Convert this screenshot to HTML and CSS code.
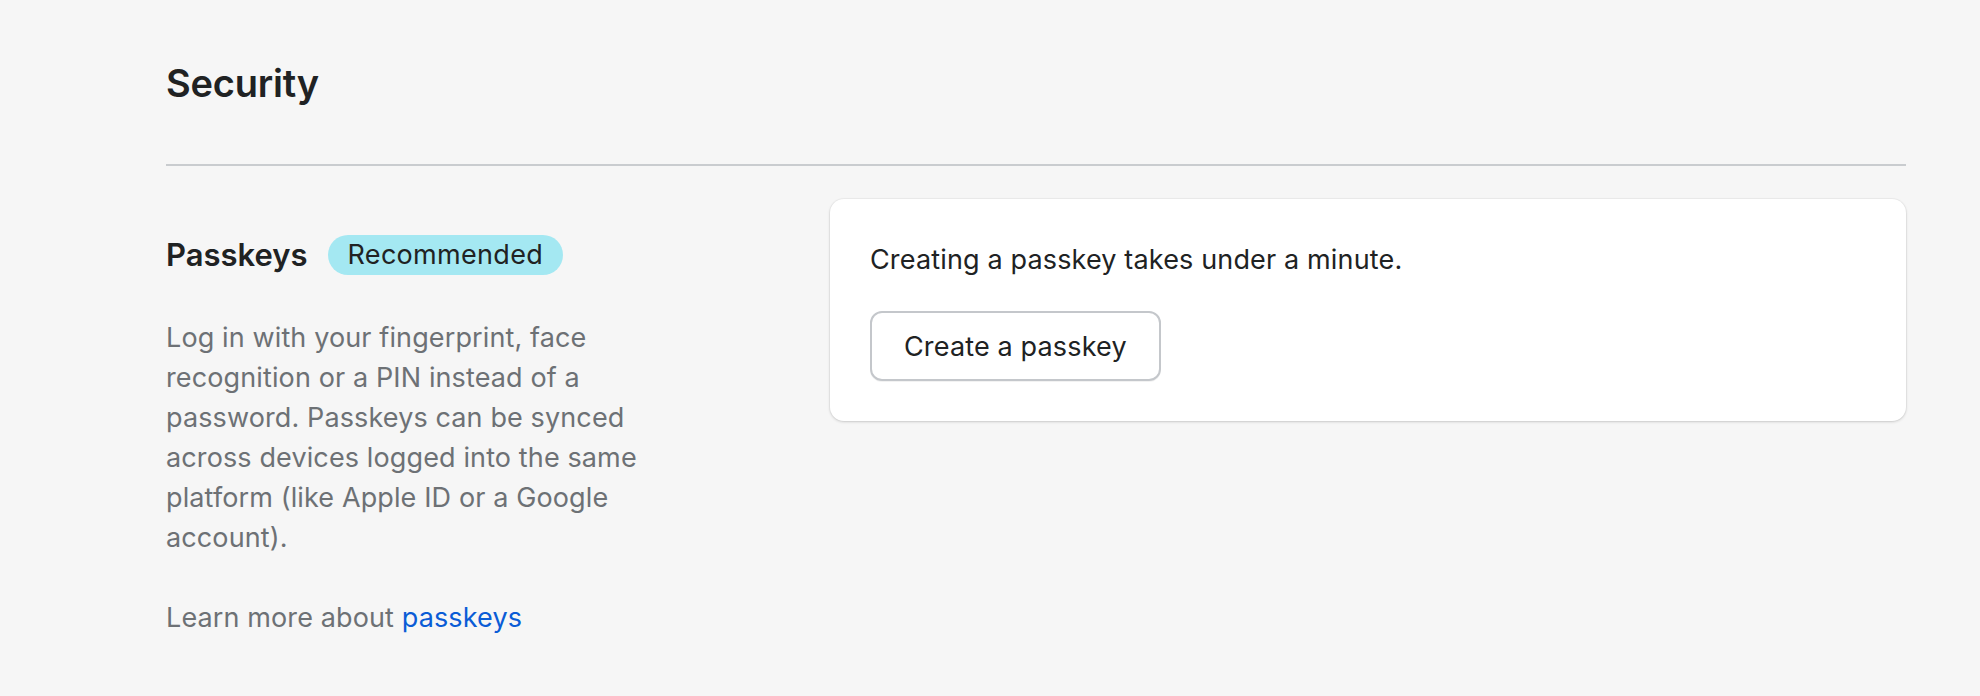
FILE: index.html
```html
<!DOCTYPE html>
<html lang="en">
<head>
<meta charset="utf-8">
<title>Security</title>
<link rel="stylesheet" href="styles.css">
</head>
<body>
<main class="page">
  <h1 class="page-title">Security</h1>
  <hr class="divider">
  <section class="section">
    <div class="section-info">
      <div class="section-heading">
        <h2 class="section-title">Passkeys</h2>
        <span class="badge">Recommended</span>
      </div>
      <p class="section-text">Log in with your fingerprint, face recognition or a PIN instead of a password. Passkeys can be synced across devices logged into the same platform (like Apple ID or a Google account).</p>
      <p class="section-text">Learn more about <a class="link" href="#">passkeys</a></p>
    </div>
    <div class="card">
      <p class="card-text">Creating a passkey takes under a minute.</p>
      <button class="button" type="button">Create a passkey</button>
    </div>
  </section>
</main>
</body>
</html>
```

FILE: styles.css
```css
html, body {
  margin: 0;
  padding: 0;
  background: #f6f6f6;
}

body {
  font-family: Inter, "Noto Sans", sans-serif;
  color: #202223;
}

.page {
  padding: 59px 74px 0 166px;
}

.page-title {
  margin: 0;
  font-size: 38px;
  font-weight: 600;
  line-height: 48px;
  letter-spacing: -0.2px;
}

.divider {
  margin: 57px 0 0;
  border: 0;
  height: 2px;
  background: #c9cccf;
}

.section {
  display: grid;
  grid-template-columns: 600px 1fr;
  column-gap: 64px;
  align-items: start;
  padding-top: 33px;
}

.section-info {
  padding-top: 36px;
}

.section-heading {
  display: flex;
  align-items: center;
  gap: 20px;
}

.section-title {
  margin: 0;
  font-size: 31px;
  font-weight: 600;
  line-height: 40px;
}

.badge {
  display: inline-flex;
  align-items: center;
  height: 40px;
  padding: 0 20px;
  border-radius: 20px;
  background: #a4e8f2;
  color: #202223;
  font-size: 27px;
  letter-spacing: 0.3px;
  line-height: 40px;
}

.section-text {
  margin: 0;
  max-width: 520px;
  font-size: 27px;
  letter-spacing: 0.12px;
  line-height: 40px;
  color: #6d7175;
}

.section-heading + .section-text {
  margin-top: 43px;
}

.section-text + .section-text {
  margin-top: 40px;
}

.link {
  color: #0a5cd6;
  text-decoration: none;
}

.card {
  background: #ffffff;
  border-radius: 14px;
  box-shadow: 0 1px 3px rgba(0, 0, 0, 0.16), 0 0 0 1px rgba(0, 0, 0, 0.03);
  padding: 41px 40px 40px;
}

.card-text {
  margin: 0;
  font-size: 27px;
  letter-spacing: 0.15px;
  line-height: 40px;
  color: #202223;
}

.button {
  display: inline-flex;
  align-items: center;
  margin-top: 31px;
  height: 70px;
  padding: 0 32px;
  background: #ffffff;
  border: 2px solid #c4c7cb;
  border-radius: 12px;
  box-shadow: 0 1px 0 rgba(0, 0, 0, 0.05);
  font-family: inherit;
  font-size: 27px;
  letter-spacing: 0.15px;
  color: #202223;
  cursor: pointer;
}
```
